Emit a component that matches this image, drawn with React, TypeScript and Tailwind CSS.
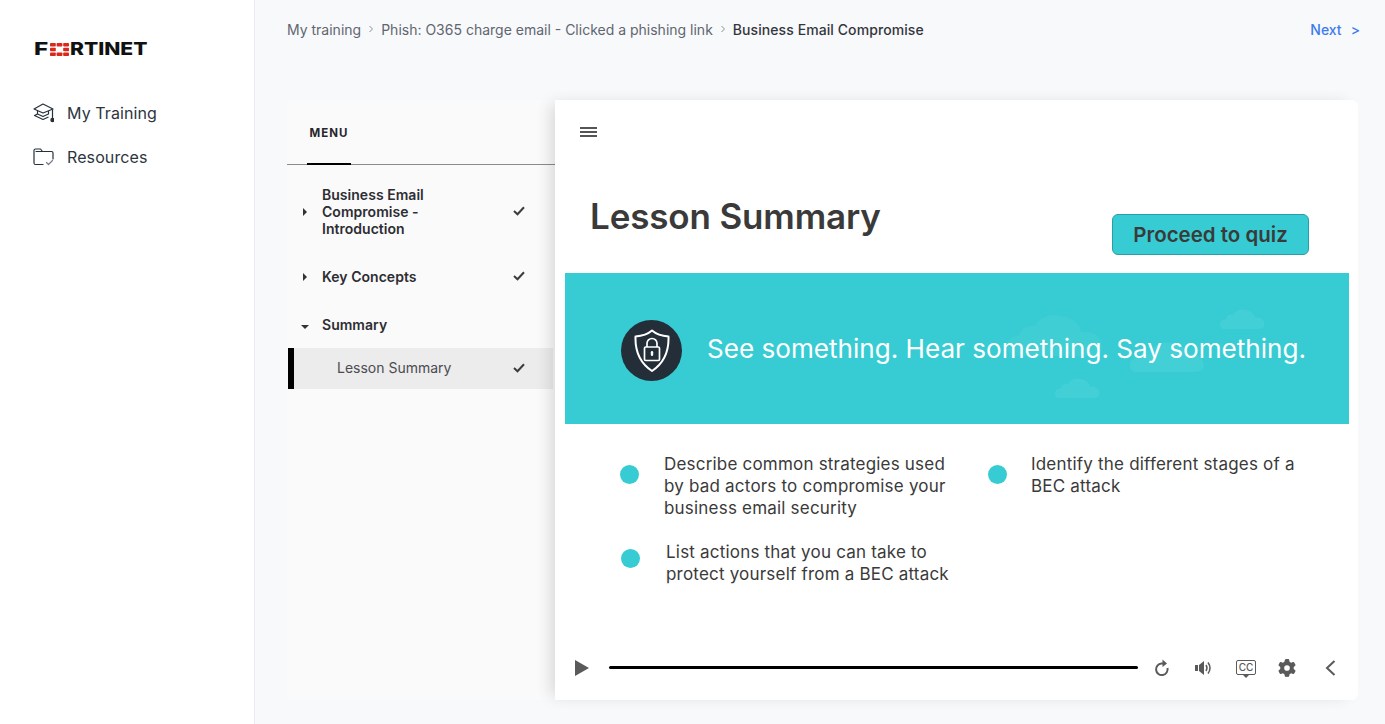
import { FaGear } from "react-icons/fa6";

function FortinetLogo() {
  const squares = [
    [0, 0], [6.6, 0], [13.2, 0],
    [0, 4.7], [13.2, 4.7],
    [0, 9.4], [6.6, 9.4], [13.2, 9.4],
  ];
  return (
    <div className="flex items-center text-[#111] font-extrabold text-[18px] leading-none font-['Inter',sans-serif]">
      <span className="inline-block w-[16px] origin-left scale-x-[1.35]">F</span>
      <svg width="19" height="13" viewBox="0 0 19 13" className="mr-[1px]">
        {squares.map(([x, y]) => (
          <rect key={`${x}-${y}`} x={x} y={y} width="5.8" height="3.6" rx="0.8" fill="#da291c" />
        ))}
      </svg>
      <span className="inline-block origin-left scale-x-[1.17] tracking-[0px]">RTINET</span>
    </div>
  );
}

function CapIcon() {
  return (
    <svg width="21" height="20" viewBox="0 0 21 20" fill="none" stroke="#27313b" strokeWidth="1.2" strokeLinejoin="round">
      <path d="M10 1 L20 6 L10 10 L1 6 Z" />
      <path d="M4.5 8 V11 L10 13.5 L15.5 11 V8" />
      <path d="M4.5 11 L1.5 12.5 L10 16.5 L15.5 14" />
      <path d="M19.5 6.5 V15" />
      <circle cx="19.5" cy="17" r="1.6" fill="#27313b" />
    </svg>
  );
}

function FolderIcon() {
  return (
    <svg width="21" height="18" viewBox="0 0 21 18" fill="none" stroke="#27313b" strokeWidth="1.2" strokeLinecap="round" strokeLinejoin="round">
      <path d="M10 16.5 H2.5 Q1 16.5 1 15 V2.5 Q1 1 2.5 1 H7.5 L9.5 3.5 H18.5 Q20 3.5 20 5 V11" />
      <path d="M3 3.5 H9" />
      <path d="M13.5 14.5 L15.5 16.5 L19.5 12.5" stroke="#77808a" />
    </svg>
  );
}

function Check() {
  return (
    <svg width="12" height="10" viewBox="0 0 12 10" fill="none" stroke="#3c3c3c" strokeWidth="2">
      <path d="M1 5 L4.5 8.3 L11 1.3" />
    </svg>
  );
}

function Chevron() {
  return (
    <svg width="6" height="8" viewBox="0 0 6 8" className="shrink-0" fill="none" stroke="#8a8f96" strokeWidth="1">
      <path d="M1.5 1 L4.5 4 L1.5 7" />
    </svg>
  );
}

function MenuRow({ label, open, done = true }: { label: string; open?: boolean; done?: boolean }) {
  return (
    <div className="flex items-center pl-[14px] pr-[28px]">
      <span className="w-[21px] shrink-0">
        {open ? (
          <span className="block w-0 h-0 mt-[4px] border-x-[4px] border-x-transparent border-t-[4px] border-t-[#333]" />
        ) : (
          <span className="block w-0 h-0 ml-[2px] border-y-[4px] border-y-transparent border-l-[4px] border-l-[#333]" />
        )}
      </span>
      <span className="w-[191px] text-[14px] leading-[17px] font-semibold text-[#2d2d33] tracking-[0.03px]">
        <span className="block w-[130px]">{label}</span>
      </span>
      {done && <span className="-mt-[2px] flex"><Check /></span>}
    </div>
  );
}

function Bullet({ text, gap, dot, extra }: { text: string[]; gap: string; dot: string; extra?: string }) {
  return (
    <div className={`flex items-start ${gap} ${extra ?? ""}`}>
      <span className={`w-[19px] h-[19px] rounded-full bg-[#37ccd3] shrink-0 ${dot}`} />
      <p className="text-[17px] leading-[22px] tracking-[0.2px] text-[#3a3a3a]">
        {text.map((line) => (
          <span key={line} className="block whitespace-nowrap">{line}</span>
        ))}
      </p>
    </div>
  );
}

const cloud = "M4 22 Q0 22 0 17 Q0 12 6 12 Q8 6 14 7 Q19 0 28 2 Q36 3 38 10 Q46 9 48 15 Q50 22 42 22 Z";

function Clouds() {
  return (
    <>
      <svg width="98" height="44" viewBox="0 0 50 22" preserveAspectRatio="none" className="absolute left-[442px] top-[39px]" fill="#fff" fillOpacity="0.04"><path d={cloud} /></svg>
      <svg width="76" height="32" viewBox="0 0 50 22" preserveAspectRatio="none" className="absolute left-[565px] top-[67px]" fill="#fff" fillOpacity="0.06"><path d={cloud} /></svg>
      <svg width="46" height="21" viewBox="0 0 50 22" preserveAspectRatio="none" className="absolute left-[655px] top-[35px]" fill="#fff" fillOpacity="0.06"><path d={cloud} /></svg>
      <svg width="46" height="21" viewBox="0 0 50 22" preserveAspectRatio="none" className="absolute left-[490px] top-[104px]" fill="#fff" fillOpacity="0.06"><path d={cloud} /></svg>
    </>
  );
}

function ShieldIcon() {
  return (
    <svg width="36" height="44" viewBox="0 0 36 44" fill="none" stroke="#fff" strokeWidth="2" strokeLinejoin="round">
      <path d="M18 1.5 C22 5 28 7 34.5 7.5 C35 22 30 34 18 42 C6 34 1 22 1.5 7.5 C8 7 14 5 18 1.5 Z" />
      <rect x="10.5" y="18" width="15" height="13.5" rx="1.2" strokeWidth="1.7" />
      <path d="M13 18 V14.5 A5 5 0 0 1 23 14.5 V18" strokeWidth="1.7" />
      <rect x="16.8" y="22" width="2.4" height="5" rx="1.2" fill="#fff" stroke="none" />
    </svg>
  );
}

export default function App() {
  return (
    <div className="flex w-full h-screen overflow-hidden bg-[#f8f9fb] font-['Inter',sans-serif]">
      {/* sidebar */}
      <aside className="w-[255px] shrink-0 bg-white border-r border-[#e9ebef] pl-[33px]">
        <div className="h-[48px] mt-[25px] flex items-center pl-[1px]">
          <FortinetLogo />
        </div>
        <nav className="mt-[30px] flex flex-col gap-[24px]">
          <div className="flex items-center gap-[13px] h-[20px]">
            <CapIcon />
            <span className="text-[16px] tracking-[0.1px] text-[#2c3540]">My Training</span>
          </div>
          <div className="flex items-center gap-[13px] h-[20px]">
            <FolderIcon />
            <span className="text-[16px] tracking-[0.1px] text-[#2c3540]">Resources</span>
          </div>
        </nav>
      </aside>

      <main className="flex-1 min-w-0 pl-[32px] pr-[27px]">
        {/* breadcrumb */}
        <div className="h-[58px] flex items-center justify-between text-[14px]">
          <div className="flex items-center gap-[7px] text-[#5f6670]">
            <span>My training</span>
            <Chevron />
            <span>Phish: O365 charge email - Clicked a phishing link</span>
            <Chevron />
            <span className="font-medium tracking-[0.08px] text-[#33363c]">Business Email Compromise</span>
          </div>
          <div className="flex items-center gap-[9px] font-medium text-[#3d7bf0] -mr-[2px]">
            <span>Next</span>
            <span className="text-[14px]">&gt;</span>
          </div>
        </div>

        <div className="mt-[42px] flex h-[600px]">
          {/* lesson menu */}
          <div className="w-[268px] shrink-0 bg-[#fafafa]">
            <div className="h-[65px] border-b border-[#8b8b8b] pl-[20px]">
              <div className="w-[44px] h-[65px] border-b-2 border-black flex justify-center pt-[26px]">
                <span className="text-[11.5px] leading-[14px] font-bold tracking-[1px] text-[#26262c]">MENU</span>
              </div>
            </div>
            <div className="mt-[21px]">
              <MenuRow label="Business Email Compromise - Introduction" />
              <div className="mt-[31px]"><MenuRow label="Key Concepts" /></div>
              <div className="mt-[31px]"><MenuRow label="Summary" open done={false} /></div>
              <div className="mt-[15px] ml-[1px] mr-[2px] h-[41px] pb-[2px] bg-[#ececec] flex items-center border-l-[6px] border-black pl-[43px] pr-[28px] justify-between">
                <span className="text-[14px] text-[#4b4b50]">Lesson Summary</span>
                <Check />
              </div>
            </div>
          </div>

          {/* slide */}
          <section className="flex-1 min-w-0 flex flex-col bg-white rounded-r-[6px] shadow-[-8px_0_16px_-4px_rgba(0,0,0,0.14)]">
            <div className="h-[64px] flex items-center pl-[25px]">
              <div className="w-[17px] flex flex-col gap-[2px]">
                <span className="h-[2px] bg-[#555]" />
                <span className="h-[2px] bg-[#555]" />
                <span className="h-[2px] bg-[#555]" />
              </div>
            </div>
            <div className="h-[109px] flex justify-between pl-[35px] pr-[49px]">
              <h1 className="mt-[29px] text-[35px] leading-[46px] tracking-[-0.15px] font-semibold text-[#3a3a3a]">Lesson Summary</h1>
              <button className="mt-[50px] w-[197px] h-[41px] pt-[2px] rounded-[6px] bg-[#37ccd3] border border-[#2a9ea6] text-[20.5px] font-semibold text-[#3a3a3a]">
                Proceed to quiz
              </button>
            </div>
            <div className="relative ml-[10px] mr-[9px] h-[151px] bg-[#37ccd3] flex items-center pl-[56px]">
              <Clouds />
              <div className="relative w-[61px] h-[61px] rounded-full bg-[#232e38] flex items-center justify-center shrink-0 mt-[4px]">
                <ShieldIcon />
              </div>
              <span className="relative ml-[25px] text-[26.1px] text-white whitespace-nowrap">
                See something. Hear something. Say something.
              </span>
            </div>
            <div className="grid grid-cols-[368px_1fr] pl-[65px] pt-[29px]">
              <Bullet gap="gap-[25px]" dot="mt-[12px]" text={["Describe common strategies used", "by bad actors to compromise your", "business email security"]} />
              <Bullet gap="gap-[24px]" dot="mt-[12px]" text={["Identify the different stages of a", "BEC attack"]} />
              <Bullet gap="gap-[26px]" dot="mt-[8px]" extra="mt-[22px] ml-[1px]" text={["List actions that you can take to", "protect yourself from a BEC attack"]} />
            </div>

            {/* player */}
            <div className="mt-auto h-[64px] flex items-center pl-[20px] text-[#5a5a5a]">
              <span className="w-0 h-0 border-y-[8px] border-y-transparent border-l-[14px] border-l-[#5a5a5a]" />
              <div className="ml-[20px] -mt-[1px] w-[529px] h-[3px] bg-black rounded-full" />
              <div className="ml-[14px] flex items-center">
                <span className="w-[20px] flex justify-center">
                  <svg width="16" height="18" viewBox="0 0 16 18" fill="none" stroke="#5a5a5a" strokeWidth="2">
                    <path d="M13.5 9 A5.8 5.8 0 1 1 7.5 4.5 H10" />
                    <path d="M8.5 0.5 L13 4.5 L8.5 8 Z" fill="#5a5a5a" stroke="none" />
                  </svg>
                </span>
                <span className="ml-[22px] w-[20px] flex justify-center">
                  <svg width="18" height="16" viewBox="0 0 18 16" fill="none" stroke="#5a5a5a">
                    <path d="M0 5 H3 V11 H0 Z" fill="#5a5a5a" stroke="none" />
                    <path d="M4 5 L9 1 V15 L4 11 Z" fill="#5a5a5a" stroke="none" />
                    <path d="M11 5 Q13 8 11 11" strokeWidth="1.5" />
                    <path d="M13 2.5 Q17 8 13 13.5" strokeWidth="1.5" />
                  </svg>
                </span>
                <span className="ml-[22px] w-[20px] flex justify-center">
                  <span className="relative -mt-[2px] w-[20px] h-[15px] border-[1.5px] border-[#5a5a5a] rounded-[2px] flex items-center justify-center text-[10px] leading-none font-medium text-[#5a5a5a]">
                    CC
                    <span className="absolute -bottom-[4px] left-[6px] w-0 h-0 border-x-[3px] border-x-transparent border-t-[3px] border-t-[#5a5a5a]" />
                  </span>
                </span>
                <span className="ml-[21px] w-[20px] flex justify-center">
                  <FaGear className="w-[18px] h-[18px] text-[#5a5a5a]" />
                </span>
                <span className="ml-[23px] w-[20px] flex justify-center">
                  <svg width="11" height="16" viewBox="0 0 11 16" fill="none" stroke="#5a5a5a" strokeWidth="2">
                    <path d="M9.5 1 L2 8 L9.5 15" />
                  </svg>
                </span>
              </div>
            </div>
          </section>
        </div>
      </main>
    </div>
  );
}
